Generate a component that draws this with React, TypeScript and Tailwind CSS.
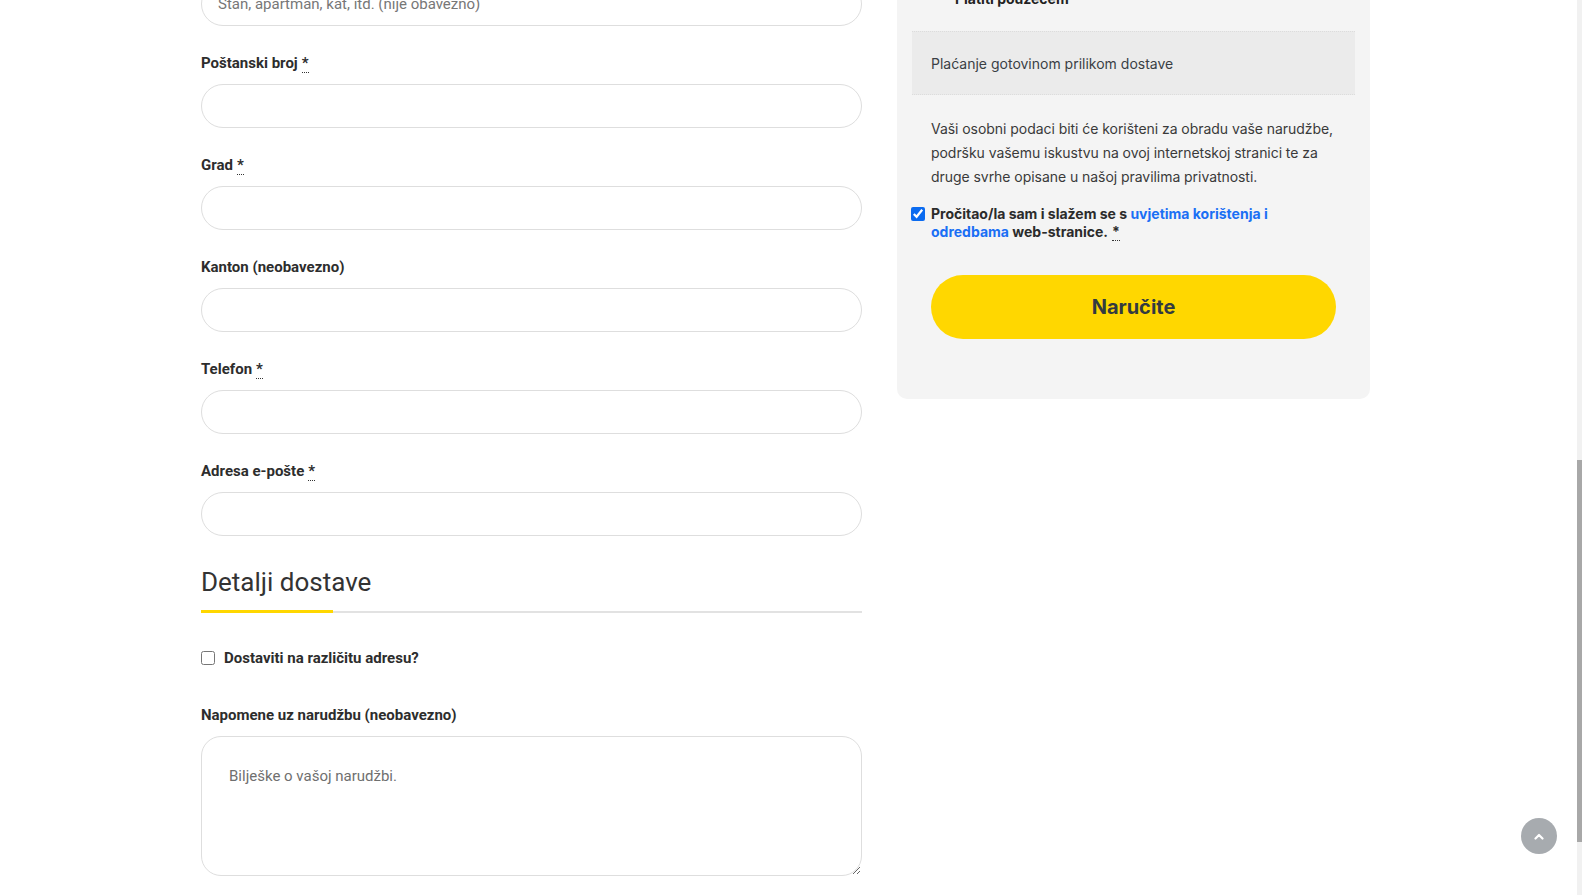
import React from 'react';

const Req = () => (
  <abbr title="obavezno" className="no-underline border-b border-dotted border-[#333] ml-1 cursor-help">*</abbr>
);

const Field = ({ label, required }: { label: string; required?: boolean }) => (
  <div className="mb-[27px]">
    <label className="block text-[15px] leading-[20px] font-bold text-[#2d2d2d] mb-[11px]">
      {label}
      {required && <Req />}
    </label>
    <input
      type="text"
      className="block w-full h-[44px] rounded-full border border-[#dedede] bg-white px-[16px] outline-none"
    />
  </div>
);

const App = () => {
  const fields = [
    { label: 'Poštanski broj', required: true },
    { label: 'Grad', required: true },
    { label: 'Kanton (neobavezno)' },
    { label: 'Telefon', required: true },
    { label: 'Adresa e-pošte', required: true },
  ];

  return (
    <div className="h-[895px] w-full overflow-hidden bg-white font-['Roboto',sans-serif]">
      <div className="flex items-start pl-[201px] gap-[35px]">
        {/* billing / shipping form */}
        <div className="w-[661px] shrink-0">
          <input
            type="text"
            placeholder="Stan, apartman, kat, itd. (nije obavezno)"
            className="block w-full h-[44px] -mt-[18px] mb-[27px] rounded-full border border-[#dedede] bg-white px-[16px] text-[15px] text-[#555] placeholder:text-[#777] outline-none"
          />

          {fields.map((f) => (
            <Field key={f.label} label={f.label} required={f.required} />
          ))}

          <div className="mt-[30px]">
            <h3 className="text-[26px] leading-[32px] font-normal text-[#333] pb-[12px]">Detalji dostave</h3>
            <div className="flex items-end">
              <div className="w-[132px] h-[3px] bg-[#ffd700]" />
              <div className="flex-1 h-[2px] bg-[#e2e2e2]" />
            </div>
          </div>

          <label className="flex items-center gap-[9px] mt-[35px] h-[20px] text-[15px] font-bold text-[#2d2d2d]">
            <input type="checkbox" className="w-[14px] h-[14px] m-0" />
            Dostaviti na različitu adresu?
          </label>

          <div className="mt-[37px]">
            <label className="block text-[15px] leading-[20px] font-bold text-[#2d2d2d] mb-[11px]">
              Napomene uz narudžbu (neobavezno)
            </label>
            <textarea
              placeholder="Bilješke o vašoj narudžbi."
              className="block w-full h-[140px] rounded-[20px] border border-[#dedede] bg-white px-[27px] pt-[30px] text-[15px] leading-[18px] text-[#555] placeholder:text-[#6f6f6f] outline-none"
            />
          </div>
        </div>

        {/* order review / payment */}
        <div className="w-[473px] shrink-0 bg-[#f4f4f4] rounded-b-[10px] px-[15px] pb-[60px] font-['Inter',sans-serif] text-[#3a3a3a]">
          <div className="-mt-[11px] h-[20px] pl-[43px] text-[14px] leading-[20px] font-bold text-[#222]">
            Platiti pouzećem
          </div>
          <div className="mt-[22px] h-[64px] flex items-center px-[19px] bg-[#ebebeb] border-y border-dotted border-[#dcdcdc] text-[14px] text-[#3a3f45]">
            Plaćanje gotovinom prilikom dostave
          </div>

          <div className="px-[19px]">
            <p className="mt-[22px] w-[420px] text-[14px] leading-[24px] tracking-[-0.05px] text-[#3a3a3a]">
              Vaši osobni podaci biti će korišteni za obradu vaše narudžbe, podršku vašemu iskustvu na ovoj
              internetskoj stranici te za druge svrhe opisane u našoj pravilima privatnosti.
            </p>

            <label className="flex items-start gap-[6px] -ml-[20px] mt-[16px] text-[14px] leading-[18px] font-bold text-[#2b2b2b]">
              <input type="checkbox" defaultChecked className="w-[14px] h-[14px] mt-[2px] m-0 shrink-0 accent-[#0b6bf0]" />
              <span>
                Pročitao/la sam i slažem se s{' '}
                <a href="#" className="text-[#1a6ff4]">uvjetima korištenja i odredbama</a> web-stranice.
                <Req />
              </span>
            </label>

            <button className="mt-[34px] w-full h-[64px] rounded-full bg-[#ffd700] text-[20px] font-bold text-[#333a40]">
              Naručite
            </button>
          </div>
        </div>
      </div>

      {/* fake page scrollbar */}
      <div className="fixed top-0 right-0 w-[5px] h-[895px] bg-[#f1f1f1]">
        <div className="mt-[460px] h-[382px] bg-[#a8a8a8]" />
      </div>

      <button className="fixed right-[25px] bottom-[41px] w-[36px] h-[36px] rounded-full bg-[#a7abaf] flex items-center justify-center">
        <svg width="10" height="7" viewBox="0 0 10 7" fill="none">
          <path d="M1.5 5.5 L5 2 L8.5 5.5" stroke="white" strokeWidth="2.2" strokeLinecap="round" strokeLinejoin="round" />
        </svg>
      </button>
    </div>
  );
};

export default App;
